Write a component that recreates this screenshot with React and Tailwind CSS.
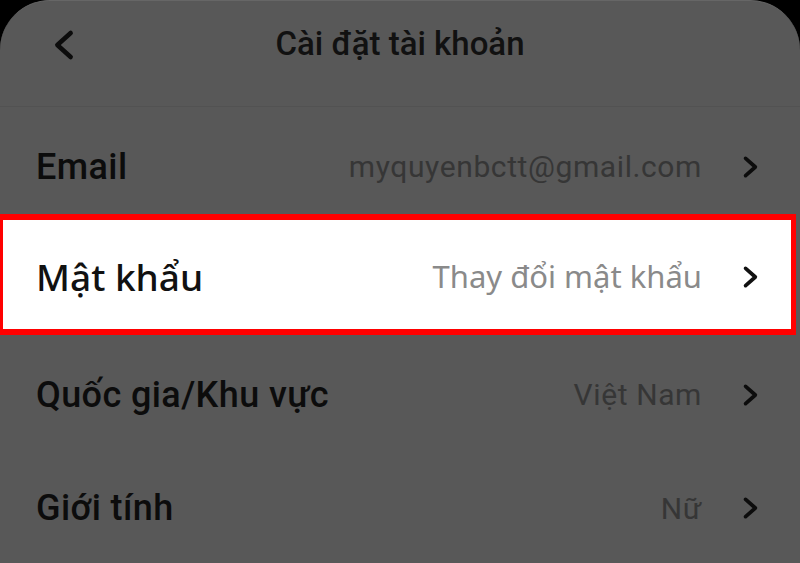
const ROWS = [
  { label: 'Email', value: 'myquyenbctt@gmail.com' },
  { label: 'Mật khẩu', value: 'Thay đổi mật khẩu', highlight: true },
  { label: 'Quốc gia/Khu vực', value: 'Việt Nam' },
  { label: 'Giới tính', value: 'Nữ' },
];

function Chevron({ dir = 'right', className = '' }) {
  return (
    <svg viewBox="0 0 24 24" className={className} fill="none" stroke="currentColor" strokeWidth="3.4" strokeLinecap="round" strokeLinejoin="round">
      {dir === 'right' ? <path d="M7 4l9 8-9 8" /> : <path d="M17 3L7 12l10 9" />}
    </svg>
  );
}

function Row({ label, value, highlight }) {
  if (highlight) {
    return (
      <div className="h-[122px] -mt-[7px] border-y-[6px] border-l-[3px] border-r-[5px] border-[#ff0000] bg-white mr-[4px] flex items-center pt-[4px] pl-[33px] pr-[27px] font-['Noto_Sans',sans-serif]">
        <span className="text-[37px] font-medium text-[#111] flex-1">{label}</span>
        <span className="text-[31px] text-[#8a8a8a] mr-[36px]">{value}</span>
        <Chevron className="w-[26px] h-[30px] text-[#111]" />
      </div>
    );
  }
  return (
    <div className="h-[115px] flex items-center pt-[5px] pl-[36px] pr-[36px]">
      <span className="text-[36px] font-medium tracking-[0.4px] text-[#0c0c0c] flex-1">{label}</span>
      <span className="text-[30px] tracking-[0.6px] text-[#363636] mr-[36px]">{value}</span>
      <Chevron className="w-[26px] h-[30px] text-[#0c0c0c]" />
    </div>
  );
}

export default function App() {
  return (
    <div className="w-[800px] h-[563px] bg-black overflow-hidden font-['Roboto',sans-serif]">
      <div className="h-full bg-[#585858] rounded-t-[50px] border-t border-[#666] flex flex-col">
        <header className="h-[107px] border-b border-[#525252] flex items-center justify-center relative">
          <Chevron dir="left" className="absolute left-[48px] top-[24px] w-[32px] h-[40px] text-[#0c0c0c]" />
          <h1 className="text-[33px] font-medium text-[#111] -mt-[20px]">Cài đặt tài khoản</h1>
        </header>
        {ROWS.map((r) => (
          <Row key={r.label} {...r} />
        ))}
      </div>
    </div>
  );
}
